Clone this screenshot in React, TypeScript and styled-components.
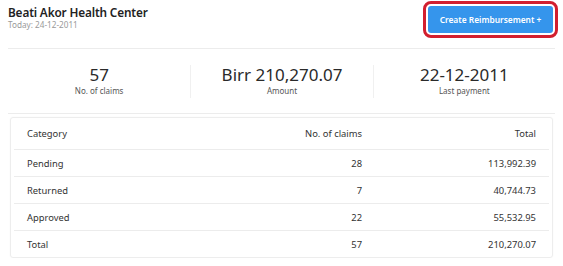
import styled, { createGlobalStyle } from "styled-components";

type Row = {
  category: string;
  claims: number;
  total: string;
};

const rows: Row[] = [
  { category: "Pending", claims: 28, total: "113,992.39" },
  { category: "Returned", claims: 7, total: "40,744.73" },
  { category: "Approved", claims: 22, total: "55,532.95" },
  { category: "Total", claims: 57, total: "210,270.07" },
];

const stats = [
  { value: "57", label: "No. of claims" },
  { value: "Birr 210,270.07", label: "Amount" },
  { value: "22-12-2011", label: "Last payment" },
];

const App = () => {
  return (
    <>
      <GlobalStyle />
      <Page>
        <Header>
          <TitleBlock>
            <Title>Beati Akor Health Center</Title>
            <Subtitle>Today: 24-12-2011</Subtitle>
          </TitleBlock>
          <CreateButton type="button">Create Reimbursement +</CreateButton>
        </Header>

        <Stats>
          {stats.map((s) => (
            <StatItem key={s.label}>
              <StatValue>{s.value}</StatValue>
              <StatLabel>{s.label}</StatLabel>
            </StatItem>
          ))}
        </Stats>

        <TableCard>
          <TableRow $head>
            <Cell>Category</Cell>
            <Cell $right>No. of claims</Cell>
            <Cell $right>Total</Cell>
          </TableRow>
          {rows.map((r) => (
            <TableRow key={r.category}>
              <Cell>{r.category}</Cell>
              <Cell $right>{r.claims}</Cell>
              <Cell $right>{r.total}</Cell>
            </TableRow>
          ))}
        </TableCard>
      </Page>
    </>
  );
};

const GlobalStyle = createGlobalStyle`
  body {
    margin: 0;
    background: #ffffff;
    font-family: "Noto Sans", "Open Sans", Arial, sans-serif;
    color: #262626;
  }
`;

const Page = styled.div`
  width: 547px;
  padding: 0 8px;
`;

const Header = styled.div`
  height: 48px;
  display: flex;
  justify-content: space-between;
  align-items: flex-start;
  border-bottom: 1px solid #ececec;
`;

const TitleBlock = styled.div`
  padding-top: 5px;
  display: flex;
  flex-direction: column;
`;

const Title = styled.div`
  font-size: 11.8px;
  font-weight: 600;
  line-height: 15px;
  color: #222;
  letter-spacing: -0.15px;
`;

const Subtitle = styled.div`
  font-size: 8.2px;
  line-height: 10px;
  color: #9a9a9a;
`;

const CreateButton = styled.button`
  margin-top: 6px;
  margin-right: 2px;
  width: 125px;
  height: 27px;
  padding: 0;
  border: none;
  border-radius: 3px;
  background: #3595ec;
  color: #ffffff;
  font-family: inherit;
  font-size: 8.4px;
  font-weight: 600;
  white-space: nowrap;
  outline: 3px solid #d21f2f;
  outline-offset: 2px;
  cursor: pointer;
`;

const Stats = styled.div`
  height: 64px;
  display: grid;
  grid-template-columns: repeat(3, 1fr);
  align-items: center;
  border-bottom: 1px solid #ececec;
`;

const StatItem = styled.div`
  height: 33px;
  display: flex;
  flex-direction: column;
  align-items: center;
  justify-content: center;
  & + & {
    border-left: 1px solid #f0f0f0;
  }
`;

const StatValue = styled.div`
  font-size: 17px;
  line-height: 19px;
  color: #2a2a2a;
`;

const StatLabel = styled.div`
  font-size: 8px;
  line-height: 13px;
  color: #555;
`;

const TableCard = styled.div`
  margin: 3px 2px 0 2px;
  padding: 0 3px;
  border: 1px solid #ededed;
  border-radius: 3px;
  box-shadow: 0 0 2px rgba(0, 0, 0, 0.04);
`;

const TableRow = styled.div<{ $head?: boolean }>`
  height: ${(p) => (p.$head ? 31 : 26)}px;
  display: grid;
  grid-template-columns: 1fr 180px 174px;
  align-items: center;
  & + & {
    border-top: 1px solid #ececec;
  }
`;

const Cell = styled.div<{ $right?: boolean }>`
  padding: 0 13px;
  font-size: 9.4px;
  color: #333;
  text-align: ${(p) => (p.$right ? "right" : "left")};
`;

export default App;
